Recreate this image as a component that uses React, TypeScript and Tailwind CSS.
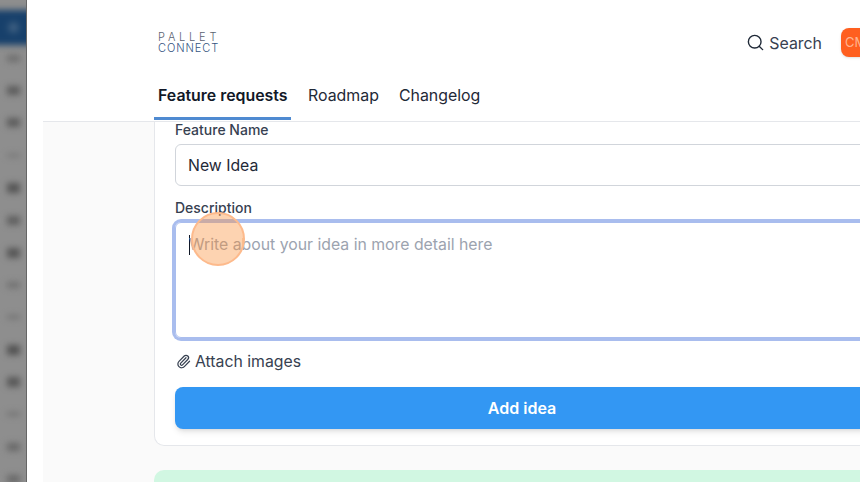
import React from 'react';
import { Search, Paperclip } from 'lucide-react';

const sidebarRows = [
  { h: 'h-[7px]', c: 'bg-[#6e6e6e]' },
  { h: 'h-[9px]', c: 'bg-[#5c5c5c]' },
  { h: 'h-[9px]', c: 'bg-[#5c5c5c]' },
  { h: 'h-[3px]', c: 'bg-[#727272]' },
  { h: 'h-[10px]', c: 'bg-[#555555]' },
  { h: 'h-[9px]', c: 'bg-[#5f5f5f]' },
  { h: 'h-[10px]', c: 'bg-[#565656]' },
  { h: 'h-[6px]', c: 'bg-[#707070]' },
  { h: 'h-[4px]', c: 'bg-[#727272]' },
  { h: 'h-[10px]', c: 'bg-[#525252]' },
  { h: 'h-[10px]', c: 'bg-[#585858]' },
  { h: 'h-[4px]', c: 'bg-[#727272]' },
  { h: 'h-[8px]', c: 'bg-[#686868]' },
  { h: 'h-[8px]', c: 'bg-[#686868]' },
];

const Sidebar = () => (
  <aside className="w-[27px] h-full shrink-0 bg-[#8e8e8e] border-r border-[#666666] overflow-hidden">
    <div className="h-[35px] mt-[10px] -mx-[10px] bg-[#17406b] blur-[3px] flex items-center justify-center">
      <div className="w-[9px] h-[9px] rounded-full bg-[#54708e] blur-[2px]" />
    </div>
    <div className="-mt-[3px]">
      {sidebarRows.map((row, i) => (
        <div key={i} className="h-[32.4px] flex items-center pl-[7px]">
          <div className={`w-[13px] blur-[3px] ${row.h} ${row.c}`} />
        </div>
      ))}
    </div>
  </aside>
);

const Header = () => (
  <header className="bg-white h-[122px] shrink-0 border-b border-[#e5e7eb] pl-[111px] flex flex-col">
    <div className="h-[73px] pl-[4px] flex items-center justify-between">
      <div className="flex flex-col mt-[13px] font-['Inter',sans-serif] font-light text-[11px] leading-[11px]">
        <span className="text-[#5b6270] tracking-[3.8px]">PALLET</span>
        <span className="text-[#34547f] tracking-[0.95px]">CONNECT</span>
      </div>
      <div className="flex items-center mt-[13px] -mr-[3px]">
        <Search className="w-[19px] h-[19px] text-[#1f2937] mr-[4px]" strokeWidth={1.75} />
        <span className="text-[15.9px] leading-[24px] pt-[2px] text-[#374151] mr-[19px]">Search</span>
        <div className="w-[22px] h-[29px] bg-[#ff5f1f] rounded-l-[8px] overflow-hidden text-[#ffb48f] text-[13px] leading-[29px] pl-[4px] shadow-sm">
          CM
        </div>
      </div>
    </div>
    <nav className="flex text-[15.9px] h-[49px]">
      <a className="w-[137px] h-[48px] pl-[4px] pt-[12px] font-semibold text-[#111827] border-b-[3px] border-[#4f8ad1]">
        Feature requests
      </a>
      <a className="ml-[17px] pt-[12px] font-normal text-[#1f2937]">Roadmap</a>
      <a className="ml-[20px] pt-[12px] font-normal text-[#1f2937]">Changelog</a>
    </nav>
  </header>
);

const Card = () => (
  <section className="w-[736px] h-[324px] shrink-0 bg-white border border-t-0 border-[#e5e7eb] rounded-b-[10px] pl-[20px] pt-0 flex flex-col">
    <label className="h-[22px] text-[14px] leading-[16px] font-medium text-[#374151]">Feature Name</label>
    <div className="w-[694px] h-[42px] shrink-0 rounded-[6px] border border-[#d1d5db] px-[12px] pt-px flex items-center text-[15.8px] text-[#1f2937]">
      New Idea
    </div>
    <label className="mt-[14px] h-[22px] text-[14px] leading-[16px] font-medium text-[#374151]">Description</label>
    <div className="w-[694px] h-[116px] shrink-0 rounded-[6px] border border-[#a9bdee] ring-[3px] ring-[#a9bdee] px-[13px] pt-[10px] flex items-start text-[15.8px] text-[#9ca3af] leading-[24px]">
      <span className="w-px h-[20px] mt-[2px] bg-[#111827] -mr-px" />
      Write about your idea in more detail here
    </div>
    <div className="mt-[11px] h-[24px] pt-px flex items-center text-[15.8px] text-[#374151]">
      <Paperclip className="w-[15px] h-[15px] mr-[4px] ml-px -mt-px text-[#374151]" strokeWidth={2} />
      Attach images
    </div>
    <button className="mt-[14px] w-[694px] h-[42px] shrink-0 rounded-[8px] bg-[#3397f3] text-white text-[16px] font-semibold shadow-md">
      Add idea
    </button>
  </section>
);

const App: React.FC = () => {
  return (
    <div className="relative w-[860px] h-[482px] overflow-hidden flex bg-white font-['Inter',sans-serif]">
      <Sidebar />
      <div className="flex-1 min-w-0 h-full flex flex-col pl-[16px]">
        <Header />
        <main className="flex-1 bg-[#fafafa] pl-[111px] flex flex-col overflow-hidden">
          <Card />
          <div className="w-[736px] h-[40px] shrink-0 mt-[24px] bg-[#d1f7e2] rounded-t-[10px]" />
        </main>
      </div>
      {/* click marker from the recording */}
      <div className="absolute left-[191px] top-[212px] w-[54px] h-[54px] rounded-full bg-[#fb923c]/40 border-2 border-[#fdba8c]" />
    </div>
  );
};

export default App;
